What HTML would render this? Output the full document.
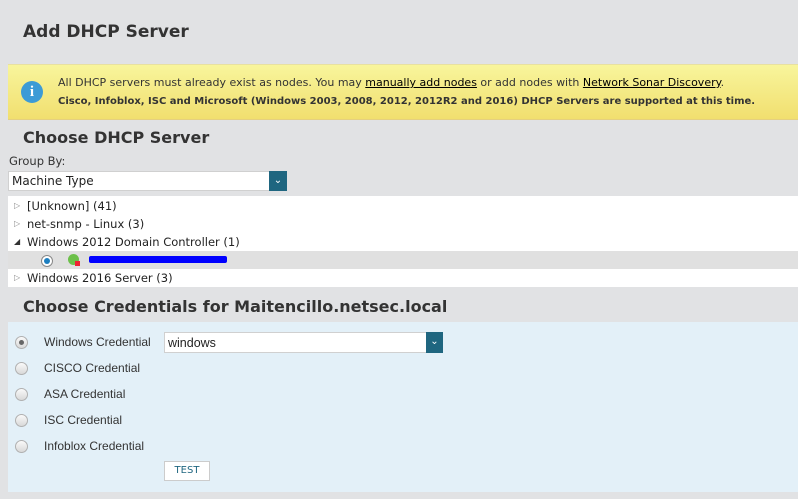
<!DOCTYPE html>
<html><head><style>
body{margin:0;width:798px;height:499px;background:#e1e2e4;font-family:"DejaVu Sans","Liberation Sans",sans-serif;position:relative;overflow:hidden;color:#222}
.a{position:absolute}
h1{position:absolute;margin:0;font-size:17px;font-weight:bold;color:#333;left:23px;top:22px}
h2{position:absolute;margin:0;font-size:16px;font-weight:bold;color:#333;left:23px}
.note{left:8px;top:64px;width:790px;height:54px;background:linear-gradient(#f8f59c,#f1df6f);border-top:1px solid #e8e0a0;border-bottom:1px solid #e5d080}
.note .t{position:absolute;left:50px;font-size:11px;color:#333;white-space:nowrap}
.note u{color:#000}
.ic{left:13px;top:16px;width:22px;height:22px;border-radius:50%;background:#3c9bd6;color:#fff;font-weight:bold;font-size:15px;text-align:center;line-height:22px;font-family:"Liberation Serif",serif}
.sel{background:#fff;border:1px solid #d0d0d0;box-sizing:border-box;font-size:12px;padding-left:3px;line-height:18px}
.btn{background:#1f6680;color:#fff;font-size:10px;text-align:center;line-height:19px}
.tree{left:8px;top:196px;width:790px;height:91px;background:#fff}
.row{position:absolute;left:0;width:790px;height:18px;font-size:11.5px;line-height:18px}
.row span.tri{position:absolute;left:6px;color:#888;font-size:8px}
.row span.l{position:absolute;left:19px}
.cred{left:8px;top:322px;width:790px;height:170px;background:#e3f0f8}
.rb{position:absolute;left:7px;width:11px;height:11px;border-radius:50%;border:1px solid #b0b0b0;background:linear-gradient(#fafafa,#d8d8d8)}
.cl{position:absolute;left:36px;font-family:"Liberation Sans",sans-serif;font-size:12px;color:#333}
</style></head><body>
<h1>Add DHCP Server</h1>
<div class="a note">
<div class="a ic">i</div>
<div class="t" style="top:11px">All DHCP servers must already exist as nodes. You may <u>manually add nodes</u> or add nodes with <u>Network Sonar Discovery</u>.</div>
<div class="t" style="top:31px;font-weight:bold;font-size:10px">Cisco, Infoblox, ISC and Microsoft (Windows 2003, 2008, 2012, 2012R2 and 2016) DHCP Servers are supported at this time.</div>
</div>
<h2 style="top:128px">Choose DHCP Server</h2>
<div class="a" style="left:9px;top:154px;font-size:11.5px;color:#333">Group By:</div>
<div class="a sel" style="left:8px;top:171px;width:262px;height:20px">Machine Type</div>
<div class="a btn" style="left:269px;top:171px;width:18px;height:20px">&#8964;</div>
<div class="a tree">
<div class="row" style="top:1px"><span class="tri">&#9655;</span><span class="l">[Unknown] (41)</span></div>
<div class="row" style="top:19px"><span class="tri">&#9655;</span><span class="l">net-snmp - Linux (3)</span></div>
<div class="row" style="top:37px"><span class="tri" style="color:#333">&#9698;</span><span class="l">Windows 2012 Domain Controller (1)</span></div>
<div class="row" style="top:55px;background:#e0e0e0">
<div class="a" style="left:33px;top:4px;width:10px;height:10px;border-radius:50%;border:1px solid #888;background:#fff"><div class="a" style="left:2px;top:2px;width:6px;height:6px;border-radius:50%;background:#1d7fc0"></div></div>
<div class="a" style="left:60px;top:3px;width:11px;height:11px;border-radius:50%;background:#6cc04a"></div>
<div class="a" style="left:67px;top:10px;width:5px;height:5px;background:#e23"></div>
<div class="a" style="left:81px;top:5px;width:138px;height:7px;background:#0000ff;border-radius:2px"></div>
</div>
<div class="row" style="top:73px"><span class="tri">&#9655;</span><span class="l">Windows 2016 Server (3)</span></div>
</div>
<h2 style="top:297px">Choose Credentials for Maitencillo.netsec.local</h2>
<div class="a cred">
<div class="rb" style="top:14px"><div class="a" style="left:3px;top:3px;width:5px;height:5px;border-radius:50%;background:#666"></div></div>
<div class="cl" style="top:13px">Windows Credential</div>
<div class="rb" style="top:40px"></div><div class="cl" style="top:39px">CISCO Credential</div>
<div class="rb" style="top:66px"></div><div class="cl" style="top:65px">ASA Credential</div>
<div class="rb" style="top:92px"></div><div class="cl" style="top:91px">ISC Credential</div>
<div class="rb" style="top:118px"></div><div class="cl" style="top:117px">Infoblox Credential</div>
<div class="a sel" style="left:156px;top:10px;width:263px;height:21px;font-family:'Liberation Sans',sans-serif;font-size:12.5px;line-height:20px">windows</div>
<div class="a btn" style="left:418px;top:10px;width:17px;height:21px">&#8964;</div>
<div class="a" style="left:156px;top:139px;width:44px;height:18px;background:#fff;border:1px solid #ccc;color:#1f6680;font-size:10px;text-align:center;line-height:18px">TEST</div>
</div>
</body></html>
